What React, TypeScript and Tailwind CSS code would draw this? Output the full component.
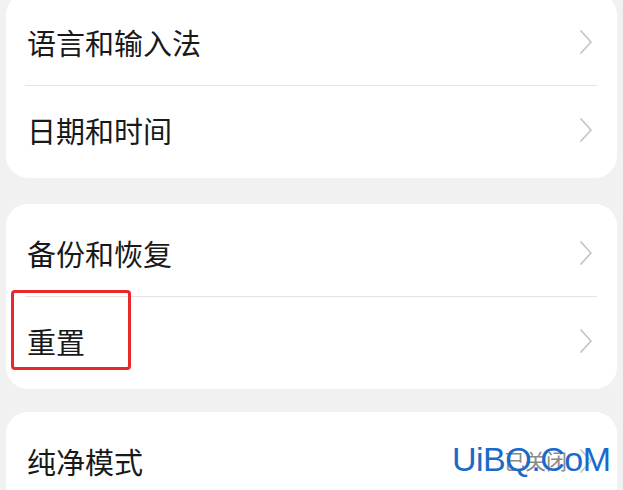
const cjk = { fontFamily: '"Noto Sans CJK SC", "Noto Sans", sans-serif' };

function Chevron() {
  return (
    <svg width="14" height="26" viewBox="0 0 14 26" fill="none" className="shrink-0">
      <path d="M2 2 L12 13 L2 24" stroke="#c6c6c6" strokeWidth="1.8" strokeLinecap="round" strokeLinejoin="round" />
    </svg>
  );
}

function Row({ label, value, divider }: { label: string; value?: string; divider?: boolean }) {
  return (
    <div>
      <div className="h-[87px] flex items-center pl-[21px] pr-[24px]">
        <span className="text-[29px] leading-none text-[#191919] flex-1 pt-[1px]">{label}</span>
        {value && <span className="text-[21px] text-[#8a8a8a] mr-[12px]">{value}</span>}
        <Chevron />
      </div>
      {divider && <div className="ml-[19px] mr-[20px] h-px bg-[#e4e4e4]" />}
    </div>
  );
}

export default function App() {
  return (
    <div className="w-[623px] h-[490px] overflow-hidden bg-[#f1f1f2] px-[6px] relative" style={cjk}>
      <div className="flex flex-col -mt-[7px]">
        <div className="bg-white rounded-[22px] py-[5px]">
          <Row label="语言和输入法" divider />
          <Row label="日期和时间" />
        </div>
        <div className="bg-white rounded-[22px] py-[5px] relative mt-[26px]">
          <Row label="备份和恢复" divider />
          <Row label="重置" />
          <div className="absolute left-[5px] top-[86px] w-[120px] h-[80px] border-[3px] border-[#e8292b] rounded-[4px]" />
        </div>
        <div className="bg-white rounded-[22px] py-[5px] mt-[23px]">
          <Row label="纯净模式" value="已关闭" />
        </div>
      </div>
      <div
        className="absolute left-[452px] top-[442px] text-[34px] leading-none text-[#1a6acb] tracking-[-0.5px]"
        style={{ fontFamily: '"Liberation Sans", Arial, sans-serif' }}
      >
        UiBQ.CoM
      </div>
    </div>
  );
}
